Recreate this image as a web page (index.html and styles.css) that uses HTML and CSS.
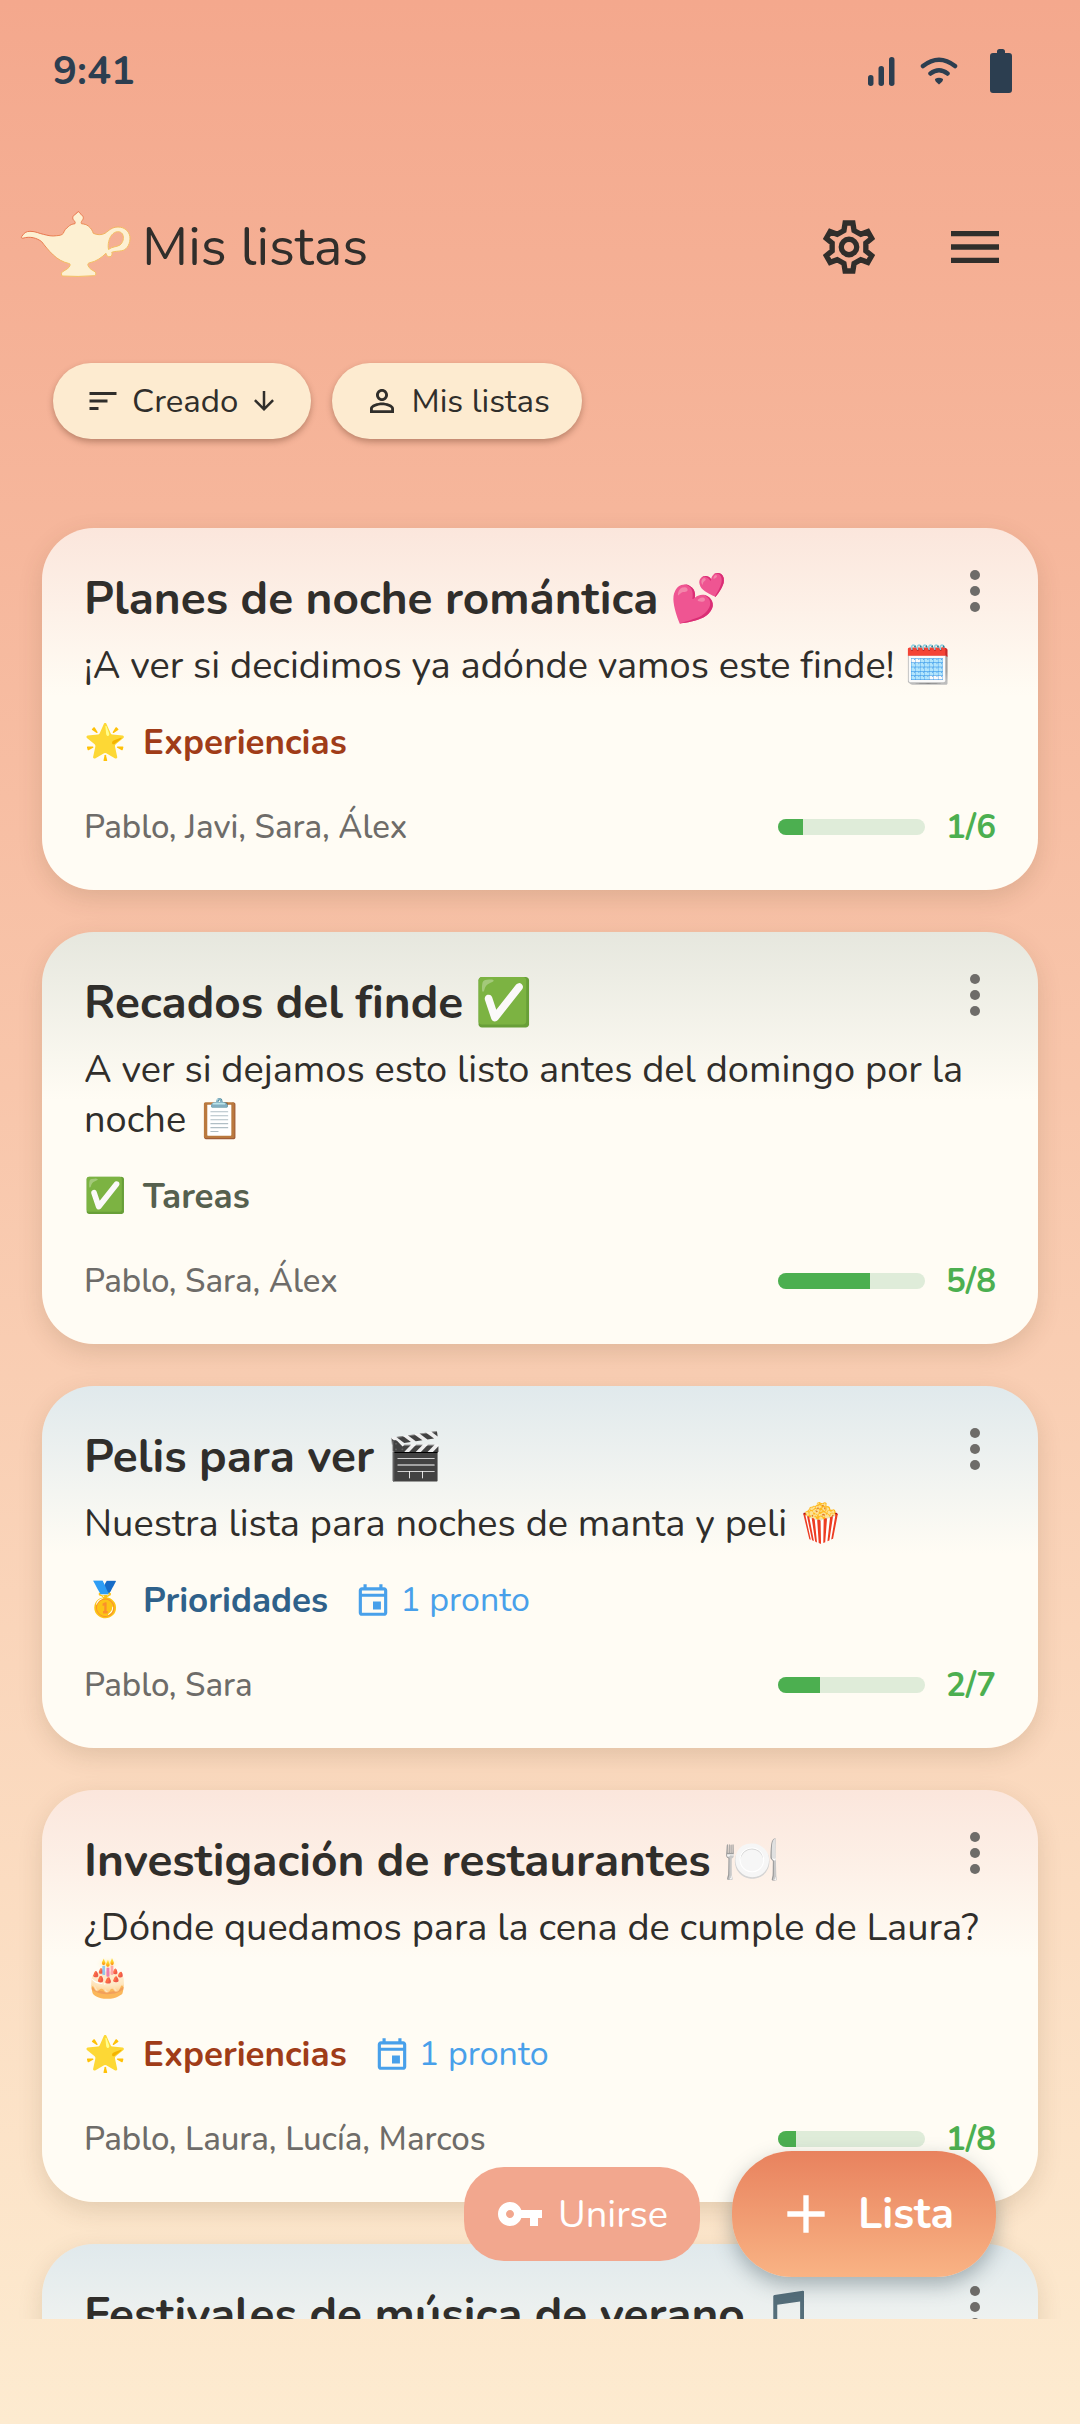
FILE: index.html
```
<!DOCTYPE html>
<html lang="es">
<head>
  <meta charset="UTF-8">
  <meta name="viewport" content="width=device-width, initial-scale=1">
  <title>Mis listas</title>
  <link rel="stylesheet" href="styles.css">
</head>
<body>
<div class="app">

  <div class="status-bar">
    <span class="clock">9:41</span>
    <div class="status-icons">
      <svg width="28" height="30" viewBox="0 0 28 30" aria-hidden="true">
        <rect x="0" y="19" width="5.500" height="11" rx="2.700"/>
        <rect x="10.500" y="10" width="5.500" height="20" rx="2.700"/>
        <rect x="21" y="1" width="5.500" height="29" rx="2.700"/>
      </svg>
      <svg width="38" height="30" viewBox="0 0 38 30" aria-hidden="true">
        <path d="M3 10Q19 -2.500 35 10M10.500 17.500Q19 11 27.500 17.500" fill="none" stroke="currentColor" stroke-width="4.500" stroke-linecap="round"/>
        <path d="M15 23Q19 20.500 23 23Q23.500 25 19 28.500Q14.500 25 15 23Z"/>
      </svg>
      <svg class="battery" width="22" height="44" viewBox="0 0 22 44" aria-hidden="true">
        <path d="M7 4V2.500Q7 0 9.500 0H12.500Q15 0 15 2.500V4H19Q22 4 22 7V41Q22 44 19 44H3Q0 44 0 41V7Q0 4 3 4Z"/>
      </svg>
    </div>
  </div>

  <header class="header">
    <svg class="lamp" width="112" height="74" viewBox="-1 -1 112 74" aria-hidden="true">
      <defs>
        <linearGradient id="lamp-edge" x1="0" y1="0" x2="1" y2="1">
          <stop offset="0.300" stop-color="#e8764e"/>
          <stop offset="0.600" stop-color="#f3c063"/>
        </linearGradient>
      </defs>
      <path fill-rule="evenodd" stroke="url(#lamp-edge)" d="M0.700 25.500C3 22 5 20.300 9 20.300C15 20.300 18 22.500 22.300 23.300C27 24.500 31 25.500 35.700 24.700C39 24.500 41 24 42.300 22.300C43.500 19 45 17.500 47.300 15.700C49 14 51 13 54 12.700C54.500 11 54 10.500 53 9.700C51 7.500 51.500 5 54 3.500C55.500 2.500 56.500 1.500 57.300 0.300C58.500 2 59.500 3 60.800 4C63 6 62.500 8 61 9.700C60 11 60 12 60.500 12.700C63 13 65.500 13.500 67.300 15C70.500 17.500 71.500 20 72.300 22.300C76 24 80.500 24.300 84 22.300C88 19.500 91 16 97 16C104 16 109.300 21 109 28C108.500 35 105 39 100.700 39.700C97 40.500 94 40 90.700 41.300C91.500 43 91 45.500 89 45.700C87 46 85.300 45 85 42.300C80 47 75 50.500 69 51.700C67 52 66.500 53 67 54.500C68.500 58 71 59 74 60.700C75.500 62 75 64.500 73.300 64.700Q57 66 41.300 65C40 64 40.300 61.500 41.700 60.700C45 58.500 48 57.500 49 54.500C49.300 53 49 52.500 47.300 52.300C42 51 37 48.500 32.300 44C27 39 24 35 20.700 30.700C16 27 9 25 2 27.200C0.500 27.500 0 26.500 0.700 25.500ZM87.500 38.500C86.500 33 88 27.500 90.700 24C94 20 99 19.500 101.500 23C103.500 27 102 31.500 99 34C96 36 91 35.500 87.500 38.500Z"/>
    </svg>
    <h1 class="page-title">Mis listas</h1>
    <button class="icon-button" type="button" aria-label="Ajustes">
      <svg width="64" height="64" viewBox="-12 -12 24 24" aria-hidden="true">
        <g fill="none" stroke="currentColor" stroke-width="2">
          <path d="M-1.900-6.200L-1.450-9H1.450L1.900-6.200L4.420-4.750L7.070-5.760L8.520-3.240L6.320-1.450V1.450L8.520 3.240L7.070 5.760L4.420 4.750L1.900 6.200L1.450 9H-1.450L-1.900 6.200L-4.420 4.750L-7.070 5.760L-8.520 3.240L-6.320 1.450V-1.450L-8.520-3.240L-7.070-5.760L-4.420-4.750Z"/>
          <circle r="2.900"/>
        </g>
      </svg>
    </button>
    <button class="icon-button" type="button" aria-label="Menú">
      <svg width="64" height="64" viewBox="0 0 24 24" aria-hidden="true">
        <path d="M3 6h18v2H3zM3 11h18v2H3zM3 16h18v2H3z"/>
      </svg>
    </button>
  </header>

  <div class="filters">
    <button class="chip" type="button">
      <svg width="36" height="36" viewBox="0 0 24 24" aria-hidden="true"><path d="M3 18h6v-2H3v2zM3 6v2h18V6H3zm0 7h12v-2H3v2z"/></svg>
      Creado
      <svg width="30" height="30" viewBox="0 0 24 24" aria-hidden="true"><path d="M20 12l-1.410-1.410L13 16.170V4h-2v12.170l-5.580-5.590L4 12l8 8 8-8z"/></svg>
    </button>
    <button class="chip" type="button">
      <svg width="36" height="36" viewBox="0 0 24 24" aria-hidden="true"><path d="M12 5.900c1.160 0 2.100.94 2.100 2.100s-.94 2.100-2.100 2.100S9.900 9.160 9.900 8s.94-2.100 2.100-2.100m0 9c2.970 0 6.100 1.460 6.100 2.100v1.100H5.900V17c0-.64 3.130-2.100 6.100-2.100M12 4C9.790 4 8 5.790 8 8s1.790 4 4 4 4-1.790 4-4-1.790-4-4-4zm0 9c-2.670 0-8 1.340-8 4v3h16v-3c0-2.660-5.330-4-8-4z"/></svg>
      Mis listas
    </button>
  </div>

  <main class="lists">
    <article class="card experiences">
      <div class="card-head">
        <h2 class="card-title">Planes de noche romántica 💕</h2>
        <button class="more" type="button" aria-label="Más opciones"><svg width="12" height="42" viewBox="0 0 12 42" aria-hidden="true"><circle cx="6" cy="5" r="5"/><circle cx="6" cy="21" r="5"/><circle cx="6" cy="37" r="5"/></svg></button>
      </div>
      <p class="card-text">¡A ver si decidimos ya adónde vamos este finde! 🗓️</p>
      <div class="card-tags">
        <span class="tag"><span class="tag-icon">🌟</span>Experiencias</span>
      </div>
      <div class="card-foot">
        <span class="people">Pablo, Javi, Sara, Álex</span>
        <progress class="bar" value="1" max="6" aria-label="Completado"></progress>
        <span class="count">1/6</span>
      </div>
    </article>

    <article class="card tasks">
      <div class="card-head">
        <h2 class="card-title">Recados del finde ✅</h2>
        <button class="more" type="button" aria-label="Más opciones"><svg width="12" height="42" viewBox="0 0 12 42" aria-hidden="true"><circle cx="6" cy="5" r="5"/><circle cx="6" cy="21" r="5"/><circle cx="6" cy="37" r="5"/></svg></button>
      </div>
      <p class="card-text">A ver si dejamos esto listo antes del domingo por la noche 📋</p>
      <div class="card-tags">
        <span class="tag"><span class="tag-icon">✅</span>Tareas</span>
      </div>
      <div class="card-foot">
        <span class="people">Pablo, Sara, Álex</span>
        <progress class="bar" value="5" max="8" aria-label="Completado"></progress>
        <span class="count">5/8</span>
      </div>
    </article>

    <article class="card priorities">
      <div class="card-head">
        <h2 class="card-title">Pelis para ver 🎬</h2>
        <button class="more" type="button" aria-label="Más opciones"><svg width="12" height="42" viewBox="0 0 12 42" aria-hidden="true"><circle cx="6" cy="5" r="5"/><circle cx="6" cy="21" r="5"/><circle cx="6" cy="37" r="5"/></svg></button>
      </div>
      <p class="card-text">Nuestra lista para noches de manta y peli 🍿</p>
      <div class="card-tags">
        <span class="tag"><span class="tag-icon">🥇</span>Prioridades</span>
        <span class="due"><svg width="38" height="38" viewBox="0 0 24 24" aria-hidden="true"><path d="M19 4h-1V2h-2v2H8V2H6v2H5c-1.110 0-1.990.9-1.990 2L3 20c0 1.100.89 2 2 2h14c1.100 0 2-.9 2-2V6c0-1.100-.9-2-2-2zm0 16H5V10h14v10zm0-12H5V6h14v2zm-7 5h5v5h-5z"/></svg>1 pronto</span>
      </div>
      <div class="card-foot">
        <span class="people">Pablo, Sara</span>
        <progress class="bar" value="2" max="7" aria-label="Completado"></progress>
        <span class="count">2/7</span>
      </div>
    </article>

    <article class="card experiences">
      <div class="card-head">
        <h2 class="card-title">Investigación de restaurantes 🍽️</h2>
        <button class="more" type="button" aria-label="Más opciones"><svg width="12" height="42" viewBox="0 0 12 42" aria-hidden="true"><circle cx="6" cy="5" r="5"/><circle cx="6" cy="21" r="5"/><circle cx="6" cy="37" r="5"/></svg></button>
      </div>
      <p class="card-text">¿Dónde quedamos para la cena de cumple de Laura? 🎂</p>
      <div class="card-tags">
        <span class="tag"><span class="tag-icon">🌟</span>Experiencias</span>
        <span class="due"><svg width="38" height="38" viewBox="0 0 24 24" aria-hidden="true"><path d="M19 4h-1V2h-2v2H8V2H6v2H5c-1.110 0-1.990.9-1.990 2L3 20c0 1.100.89 2 2 2h14c1.100 0 2-.9 2-2V6c0-1.100-.9-2-2-2zm0 16H5V10h14v10zm0-12H5V6h14v2zm-7 5h5v5h-5z"/></svg>1 pronto</span>
      </div>
      <div class="card-foot">
        <span class="people">Pablo, Laura, Lucía, Marcos</span>
        <progress class="bar" value="1" max="8" aria-label="Completado"></progress>
        <span class="count">1/8</span>
      </div>
    </article>

    <article class="card priorities">
      <div class="card-head">
        <h2 class="card-title">Festivales de música de verano 🎵</h2>
        <button class="more" type="button" aria-label="Más opciones"><svg width="12" height="42" viewBox="0 0 12 42" aria-hidden="true"><circle cx="6" cy="5" r="5"/><circle cx="6" cy="21" r="5"/><circle cx="6" cy="37" r="5"/></svg></button>
      </div>
    </article>
  </main>

  <div class="actions">
    <button class="join" type="button">
      <svg width="48" height="48" viewBox="0 0 24 24" aria-hidden="true"><path d="M12.650 10C11.830 7.670 9.610 6 7 6c-3.310 0-6 2.690-6 6s2.690 6 6 6c2.610 0 4.830-1.670 5.650-4H17v4h4v-4h2v-4H12.650zM7 14c-1.100 0-2-.9-2-2s.9-2 2-2 2 .9 2 2-.9 2-2 2z"/></svg>
      Unirse
    </button>
    <button class="add" type="button">
      <svg width="64" height="64" viewBox="0 0 24 24" aria-hidden="true"><path d="M19 13h-6v6h-2v-6H5v-2h6V5h2v6h6v2z"/></svg>
      Lista
    </button>
  </div>

</div>
</body>
</html>
```
FILE: styles.css
```
* {
  box-sizing: border-box;
}

body {
  margin: 0;
  color: #302e2b;
  font-family: Nunito, Lato, "Noto Color Emoji", sans-serif;
  font-variant-ligatures: none;
}

button {
  padding: 0;
  border: 0;
  background: none;
  color: inherit;
  font-family: inherit;
  cursor: pointer;
}

svg {
  display: block;
  flex: none;
  fill: currentColor;
}

.app {
  position: relative;
  display: flex;
  flex-direction: column;
  height: 100vh;
  padding-bottom: 105px;
  overflow: hidden;
  background: linear-gradient(#f4a88d, #fdebd0);
}

/* status bar */
.status-bar {
  display: flex;
  flex: none;
  align-items: center;
  justify-content: space-between;
  height: 142px;
  padding: 0 68px 0 53px;
  color: #2c3e50;
}

.clock {
  font-size: 40px;
  font-weight: 700;
}

.status-icons {
  display: flex;
  align-items: center;
  gap: 24px;
}

.battery {
  margin-left: 8px;
}

/* header */
.header {
  display: flex;
  flex: none;
  align-items: center;
  height: 210px;
  padding: 0 42px 0 20px;
}

.lamp {
  fill: #fdf0d2;
}

.page-title {
  flex: 1;
  margin: 0 0 0 10px;
  font-size: 54px;
  font-weight: 400;
}

.icon-button {
  display: flex;
  align-items: center;
  justify-content: center;
  width: 126px;
  height: 126px;
}

/* filters */
.filters {
  display: flex;
  flex: none;
  gap: 21px;
  padding: 11px 53px 0;
}

.chip {
  display: flex;
  align-items: center;
  gap: 11px;
  height: 76px;
  padding: 0 32px;
  border-radius: 38px;
  background: #fdebd0;
  box-shadow: 0 3px 6px rgba(80, 40, 20, 0.35);
  font-size: 33px;
}

/* lists */
.lists {
  display: flex;
  flex: 1;
  flex-direction: column;
  gap: 42px;
  min-height: 0;
  padding: 89px 42px 0;
  overflow: hidden;
}

.card {
  flex: none;
  padding: 42px;
  border-radius: 52px;
  background: #fffcf4;
  box-shadow: 0 8px 24px rgba(80, 60, 30, 0.15);
}

.experiences {
  background: linear-gradient(#fbe6dc, #fffcf4 168px);
}

.tasks {
  background: linear-gradient(#e6e7de, #fffcf4 168px);
}

.priorities {
  background: linear-gradient(#e0e9ec, #fffcf4 168px);
}

.card-head {
  display: flex;
}

.card-title {
  flex: 1;
  margin: 0;
  font-size: 46px;
  font-weight: 700;
  line-height: 58px;
}

.more {
  display: flex;
  justify-content: center;
  width: 42px;
  height: 42px;
  color: #6e6c69;
}

.card-text {
  margin: 13px 0 27px;
  font-size: 38px;
  line-height: 50px;
}

.card-tags {
  display: flex;
  align-items: center;
  gap: 26px;
  height: 48px;
  margin-bottom: 40px;
  font-size: 35px;
}

.tag {
  display: flex;
  align-items: center;
  font-weight: 700;
}

.tag-icon {
  width: 59px;
  font-size: 34px;
}

.experiences .tag {
  color: #a03c18;
}

.tasks .tag {
  color: #56604e;
}

.priorities .tag {
  color: #2f618a;
}

.due {
  display: flex;
  align-items: center;
  gap: 8px;
  color: #48a0ea;
  font-size: 34px;
}

.card-foot {
  display: flex;
  align-items: center;
  height: 42px;
  font-size: 33px;
}

.people {
  flex: 1;
  color: #6e6c69;
  font-weight: 500;
}

.bar {
  appearance: none;
  width: 147px;
  height: 16px;
  border: 0;
  border-radius: 8px;
  overflow: hidden;
  background: #dfecd9;
}

.bar::-webkit-progress-bar {
  background: #dfecd9;
}

.bar::-webkit-progress-value {
  background: #4caf50;
}

.count {
  min-width: 71px;
  color: #4caf50;
  font-weight: 700;
  text-align: right;
}

/* floating buttons */
.actions {
  position: absolute;
  right: 84px;
  bottom: 147px;
  display: flex;
  align-items: center;
  gap: 32px;
  color: #fff;
}

.join {
  display: flex;
  align-items: center;
  gap: 14px;
  height: 94px;
  padding: 0 32px;
  border-radius: 40px;
  background: #f2a78e;
  font-size: 38px;
}

.add {
  display: flex;
  align-items: center;
  gap: 20px;
  height: 126px;
  padding: 0 42px;
  border-radius: 60px;
  background: linear-gradient(#e8825e, #f9b384);
  box-shadow: 0 8px 20px rgba(40, 60, 70, 0.35);
  font-size: 43px;
  font-weight: 700;
}
```
